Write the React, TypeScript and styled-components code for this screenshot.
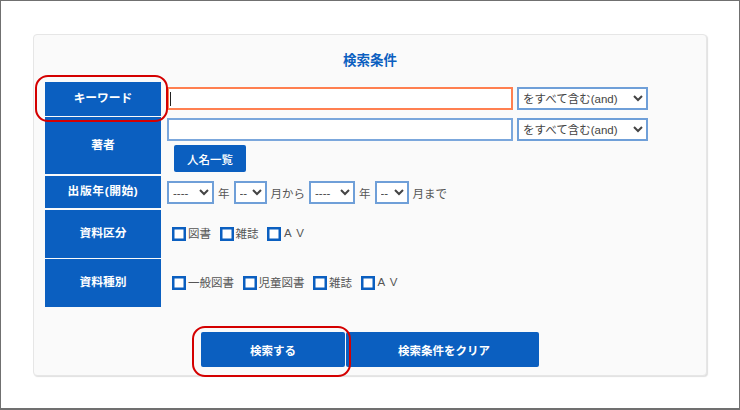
import React from "react";
import styled, { createGlobalStyle } from "styled-components";

const Global = createGlobalStyle`
  html, body { margin: 0; padding: 0; background: #fff; }
  * { box-sizing: border-box; }
  body { font-family: "Liberation Sans", "Noto Sans CJK JP", sans-serif; color: #444; font-size: 12px; }
`;
const BLUE = "#0b5fc0";

const Frame = styled.div`
  position: relative;
  width: 740px;
  height: 410px;
  border: 1px solid #707070;
  border-bottom-width: 2px;
  padding: 33px 32px 0;
  background: #fff;
  overflow: hidden;
`;
const Card = styled.div`
  width: 674px;
  height: 342px;
  background: #fafafa;
  border: 1px solid #e6e6e6;
  border-radius: 4px;
  box-shadow: 1px 1px 1px #e0e0e0;
  padding: 0 11px;
`;
const Title = styled.h2`
  margin: 0;
  height: 47px;
  padding: 17px 0 0;
  text-align: center;
  font-size: 13.5px;
  line-height: 18px;
  font-weight: 700;
  color: ${BLUE};
`;
const Row = styled.div<{ $h: number; $gap?: number }>`
  display: flex;
  height: ${(p) => p.$h}px;
  margin-bottom: ${(p) => p.$gap ?? 2}px;
`;
const Label = styled.div<{ $track?: number }>`
  flex: 0 0 116px;
  display: flex;
  align-items: center;
  justify-content: center;
  padding-bottom: 5px;
  background: ${BLUE};
  color: #fff;
  font-size: 11.75px;
  font-weight: 700;
  letter-spacing: ${(p) => p.$track ?? 0}px;
`;
const Value = styled.div<{ $top?: number }>`
  flex: 1;
  padding: ${(p) => p.$top ?? 0}px 0 0 6px;
`;
const Line = styled.div`
  display: flex;
  align-items: center;
  gap: 4px;
`;
const TextInput = styled.input<{ $active?: boolean }>`
  width: 346px;
  height: 23px;
  padding: 0 2px;
  border: 2px solid ${(p) => (p.$active ? "#ff7f50" : "#7ba7dc")};
  background: #fff;
  background-image: ${(p) => (p.$active ? "linear-gradient(#222, #222)" : "none")};
  background-repeat: no-repeat;
  background-size: 1px 14px;
  background-position: 1px center;
  border-radius: 0;
  outline: none;
`;
const Select = styled.select<{ $w: number }>`
  width: ${(p) => p.$w}px;
  height: 23px;
  border: 2px solid #6f9fd8;
  border-radius: 0;
  background: #fff;
  color: #444;
  font: 11.5px "Liberation Sans", "Noto Sans CJK JP", sans-serif;
  padding: 0;
`;
const SmallButton = styled.button`
  display: block;
  width: 72px;
  height: 27px;
  margin: 4px 0 0 7px;
  padding: 0;
  border: 0;
  border-radius: 2px;
  background: ${BLUE};
  color: #fff;
  font: 500 11.5px "Liberation Sans", "Noto Sans CJK JP", sans-serif;
`;
const Unit = styled.span`
  font-size: 11.5px;
  color: #555;
`;
const CheckRow = styled.div`
  display: flex;
  align-items: center;
  gap: 8.5px;
  padding-left: 5px;
  height: 100%;
  padding-bottom: 2px;
`;
const CheckItem = styled.label<{ $wide?: boolean }>`
  display: flex;
  align-items: center;
  gap: ${(p) => (p.$wide ? 3 : 2)}px;
  font-size: 11.5px;
  letter-spacing: ${(p) => (p.$wide ? 1 : 0)}px;
  color: #555;
`;
const Box = styled.input.attrs({ type: "checkbox" })`
  appearance: none;
  width: 14px;
  height: 14px;
  margin: 2px 0 0;
  border: 2px solid ${BLUE};
  box-shadow: inset 0 0 0 0.5px ${BLUE};
  background: #fff;
`;
const Actions = styled.div`
  display: flex;
  gap: 1px;
  margin: 25px 0 0 156px;
`;
const MainButton = styled.button<{ $w: number; $shift?: number }>`
  width: ${(p) => p.$w}px;
  height: 35px;
  padding: 0 0 0 ${(p) => p.$shift ?? 0}px;
  border: 0;
  border-radius: 2px;
  background: ${BLUE};
  color: #fff;
  font: 700 11.5px "Liberation Sans", "Noto Sans CJK JP", sans-serif;
`;
const Highlight = styled.div<{ $x: number; $y: number; $w: number; $h: number; $r: number }>`
  position: absolute;
  left: ${(p) => p.$x}px;
  top: ${(p) => p.$y}px;
  width: ${(p) => p.$w}px;
  height: ${(p) => p.$h}px;
  border: 2px solid #d40000;
  border-radius: ${(p) => p.$r}px;
  pointer-events: none;
`;

const Checks = ({ items }: { items: string[] }) => (
  <CheckRow>
    {items.map((t) => (
      <CheckItem key={t} $wide={t === "A V"}>
        <Box />
        {t}
      </CheckItem>
    ))}
  </CheckRow>
);

export default function App() {
  return (
    <>
      <Global />
      <Frame>
        <Card>
          <Title>検索条件</Title>
          <Row $h={34} $gap={1}>
            <Label>キーワード</Label>
            <Value $top={5}>
              <Line>
                <TextInput $active defaultValue="" />
                <Select $w={131}><option>をすべて含む(and)</option></Select>
              </Line>
            </Value>
          </Row>
          <Row $h={57}>
            <Label>著者</Label>
            <Value $top={1}>
              <Line>
                <TextInput />
                <Select $w={131}><option>をすべて含む(and)</option></Select>
              </Line>
              <SmallButton>人名一覧</SmallButton>
            </Value>
          </Row>
          <Row $h={32}>
            <Label $track={0.6}>出版年(開始)</Label>
            <Value $top={5}>
              <Line>
                <Select $w={47}><option>----</option></Select>
                <Unit>年</Unit>
                <Select $w={33}><option>--</option></Select>
                <Unit>月から</Unit>
                <Select $w={46}><option>----</option></Select>
                <Unit>年</Unit>
                <Select $w={34}><option>--</option></Select>
                <Unit>月まで</Unit>
              </Line>
            </Value>
          </Row>
          <Row $h={48} $gap={1}>
            <Label>資料区分</Label>
            <Value><Checks items={["図書", "雑誌", "A V"]} /></Value>
          </Row>
          <Row $h={48} $gap={0}>
            <Label>資料種別</Label>
            <Value><Checks items={["一般図書", "児童図書", "雑誌", "A V"]} /></Value>
          </Row>
          <Actions>
            <MainButton $w={144}>検索する</MainButton>
            <MainButton $w={193} $shift={3}>検索条件をクリア</MainButton>
          </Actions>
        </Card>
        <Highlight $x={34} $y={74} $w={133} $h={47} $r={13} />
        <Highlight $x={191} $y={325} $w={159} $h={51} $r={13} />
      </Frame>
    </>
  );
}
